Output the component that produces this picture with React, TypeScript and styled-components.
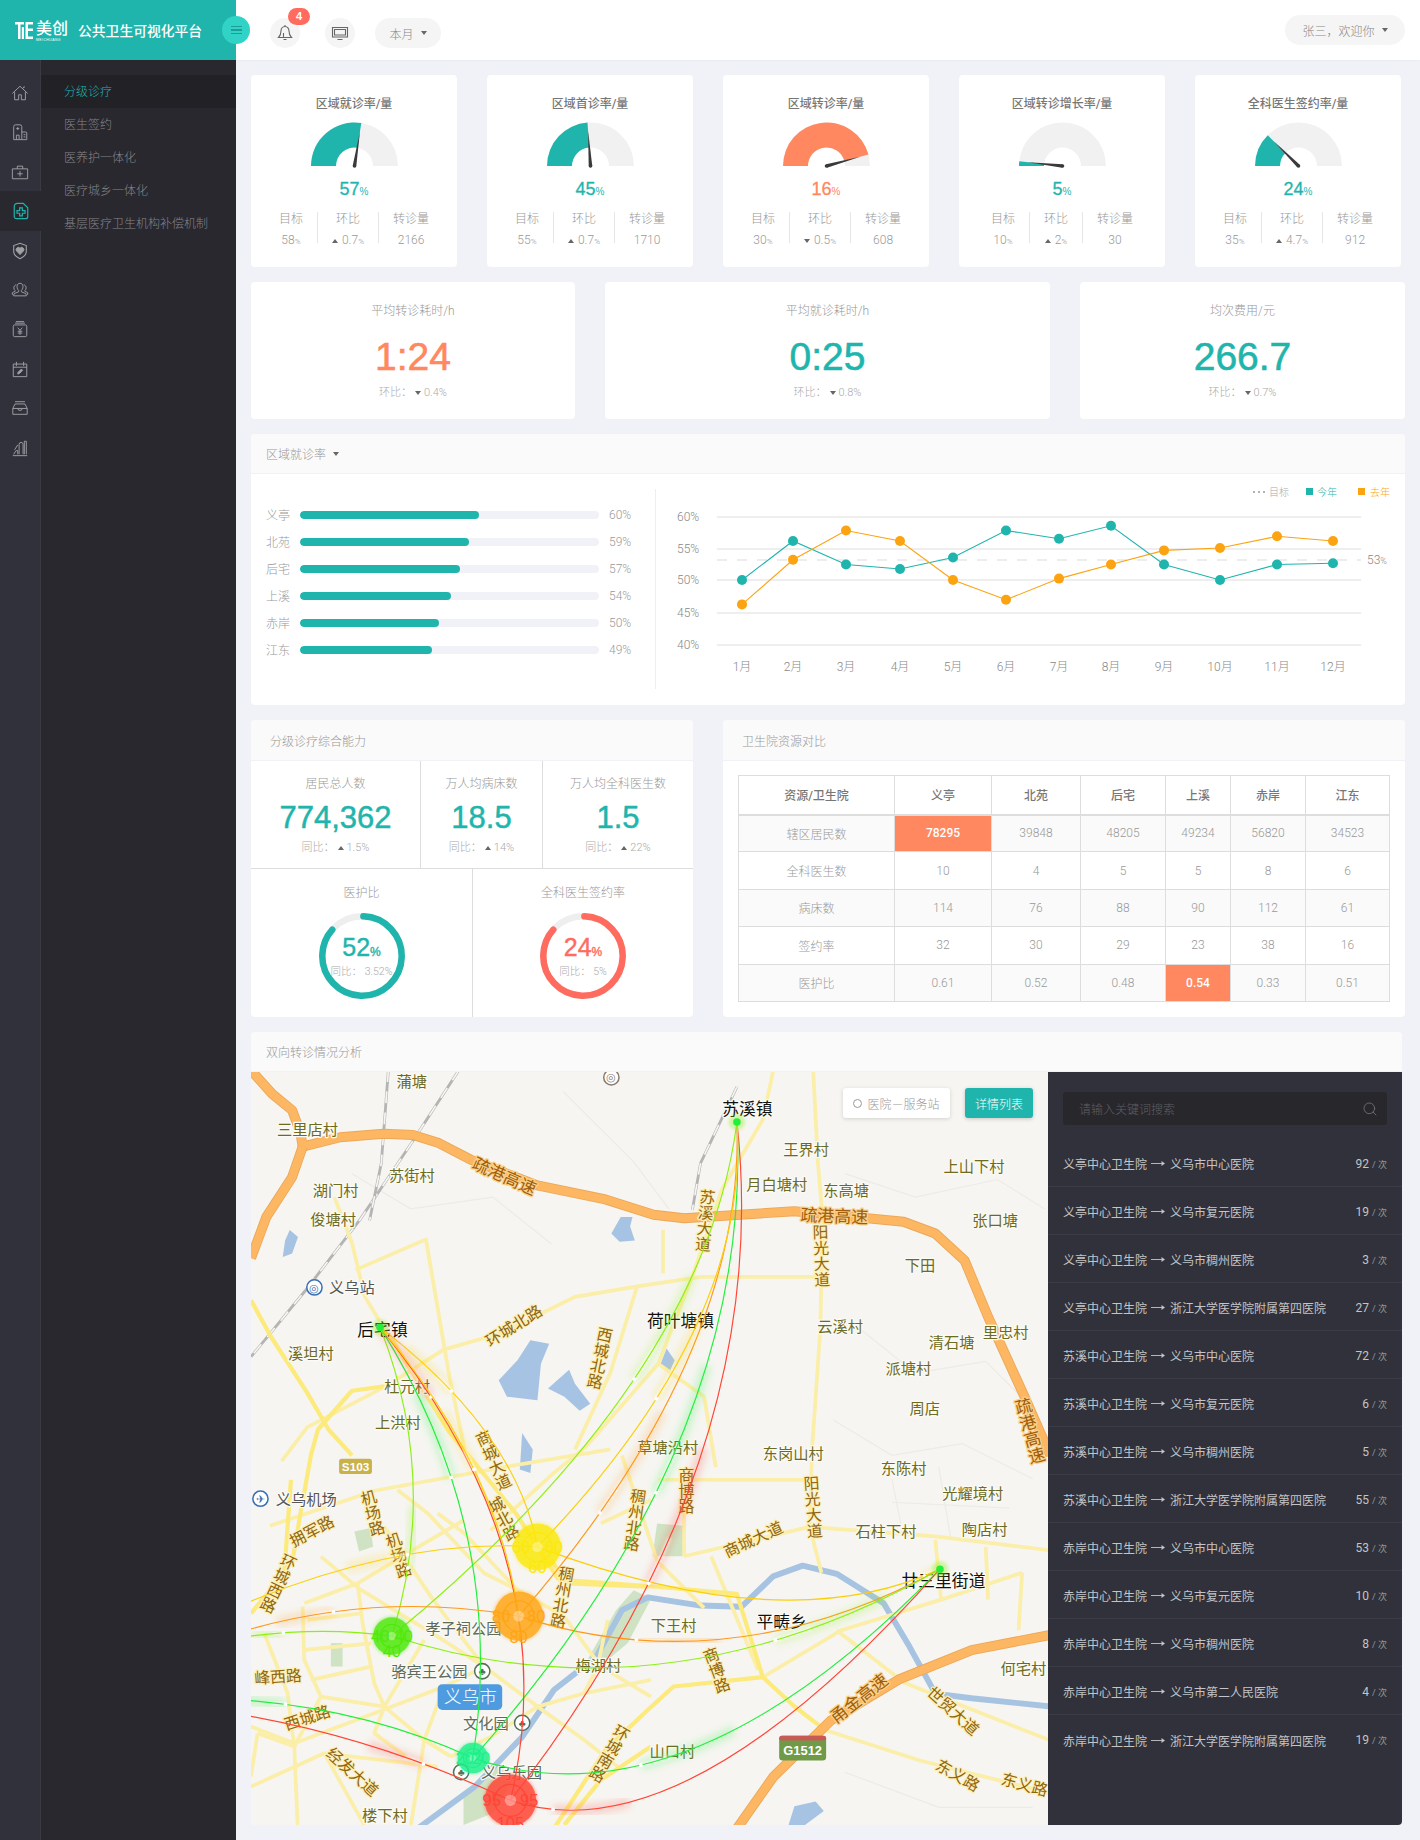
import React, { FC } from 'react';
import styled, { createGlobalStyle } from 'styled-components';
import { Search } from 'lucide-react';

const TEAL = '#1fb5ad';
const CORAL = '#ff8860';
const RED = '#ff6b5e';
const UI_FONT = `Roboto, "Noto Sans CJK SC", sans-serif`;
const NUM_FONT = `"Liberation Sans", "Noto Sans CJK SC", sans-serif`;

const GlobalStyle = createGlobalStyle`
  html, body {
    margin: 0;
    padding: 0;
    background: #f0f2f7;
    font-family: ${UI_FONT};
    font-weight: 300;
    color: #999;
  }
  * { box-sizing: border-box; }
`;

const Page = styled.div`
  display: grid;
  grid-template-columns: 236px 1fr;
  width: 1420px;
  min-height: 1840px;
`;

const Sidebar = styled.aside`
  display: flex;
  flex-direction: column;
  position: relative;
  z-index: 2;
`;

const Brand = styled.div`
  position: relative;
  display: flex;
  align-items: center;
  height: 60px;
  padding-left: 15px;
  background: ${TEAL};
  color: #fff;
`;

const LogoWord = styled.span`
  position: relative;
  width: 32px;
  margin: -3px 10px 0 3px;
  font-size: 16px;
  font-weight: 500;
  line-height: 20px;
  white-space: nowrap;

  &::after {
    content: 'MEICHUANG';
    position: absolute;
    left: 0;
    bottom: -3px;
    font-family: ${NUM_FONT};
    font-size: 3.5px;
    line-height: 4px;
    font-weight: 400;
    letter-spacing: 0.4px;
  }
`;

const BrandTitle = styled.span`
  font-size: 13.8px;
  font-weight: 500;
`;

const MenuToggle = styled.button`
  position: absolute;
  right: -14px;
  top: 16px;
  width: 28px;
  height: 28px;
  padding: 0;
  border: 0;
  border-radius: 50%;
  background: #30d3c6;
  display: flex;
  flex-direction: column;
  align-items: center;
  justify-content: center;
  gap: 2px;

  span {
    width: 11px;
    height: 1.5px;
    background: #1c9f98;
  }
`;

const SideBody = styled.div`
  display: flex;
  flex: 1;
`;

const Rail = styled.nav`
  width: 41px;
  padding-top: 13.3px;
  background: #30313a;
  border-right: 1px solid #393a42;
`;

const RailItem = styled.div<{ $active?: boolean }>`
  height: 39.4px;
  display: flex;
  align-items: center;
  justify-content: center;
  color: ${p => (p.$active ? TEAL : '#a0a0a5')};
  background: ${p => (p.$active ? '#29282e' : 'transparent')};
  margin-right: ${p => (p.$active ? '-1px' : '0')};
`;

const SubNav = styled.nav`
  flex: 1;
  padding-top: 15px;
  background: #29282e;
`;

const SubNavItem = styled.div<{ $active?: boolean }>`
  height: 33px;
  padding: 1px 0 0 23px;
  line-height: 33px;
  font-size: 12px;
  color: ${p => (p.$active ? TEAL : '#85858a')};
  background: ${p => (p.$active ? '#222126' : 'transparent')};
`;

const Main = styled.main`
  display: flex;
  flex-direction: column;
`;

const TopBar = styled.header`
  display: flex;
  align-items: center;
  height: 60px;
  padding: 6px 15px 0 34px;
  background: #fff;
  box-shadow: 0 1px 2px rgba(0, 0, 0, 0.03);
`;

const RoundIcon = styled.div`
  position: relative;
  width: 30px;
  height: 30px;
  margin-right: 25px;
  border-radius: 50%;
  background: #f5f5f5;
  color: #666;
  display: flex;
  align-items: center;
  justify-content: center;
`;

const Badge = styled.span`
  position: absolute;
  top: -10px;
  left: 18px;
  width: 22px;
  height: 17px;
  border-radius: 9px;
  background: ${RED};
  color: #fff;
  font-family: ${NUM_FONT};
  font-size: 11px;
  font-weight: 700;
  line-height: 17px;
  text-align: center;
`;

const Pill = styled.div<{ $width: number; $shift?: boolean }>`
  width: ${p => p.$width}px;
  height: 30px;
  margin-left: ${p => (p.$shift ? 'auto' : '-5px')};
  margin-top: ${p => (p.$shift ? '-6px' : '0')};
  border-radius: 15px;
  background: #f5f5f5;
  color: #888;
  font-size: 12px;
  display: flex;
  align-items: center;
  justify-content: center;
  gap: 7px;
`;

const Caret = styled.i<{ $up?: boolean; $size?: number; $color?: string }>`
  display: inline-block;
  width: 0;
  height: 0;
  border-left: ${p => p.$size ?? 3}px solid transparent;
  border-right: ${p => p.$size ?? 3}px solid transparent;
  border-top: ${p => (p.$up ? '0' : `${p.$size ?? 4}px solid ${p.$color ?? '#666'}`)};
  border-bottom: ${p => (p.$up ? `${p.$size ?? 4}px solid ${p.$color ?? '#666'}` : '0')};
  vertical-align: middle;
`;

const Content = styled.div`
  display: flex;
  flex-direction: column;
  gap: 15px;
  padding: 15px;
`;

const GaugeRow = styled.div`
  display: grid;
  grid-template-columns: repeat(5, 206px);
  gap: 30px;
`;

const Card = styled.section`
  background: #fff;
  border-radius: 4px;
  display: flex;
  flex-direction: column;
  align-items: center;
`;

const GaugeCard = styled(Card)`
  height: 192px;
  padding-top: 20px;
`;

const GaugeTitle = styled.div`
  font-size: 12px;
  line-height: 18px;
  font-weight: 500;
  color: #777;
`;

const GaugeSvg = styled.svg`
  display: block;
  margin-top: 9px;
`;

const GaugeValue = styled.div<{ $color: string }>`
  margin-top: 6px;
  line-height: 24px;
  font-family: ${NUM_FONT};
  font-size: 18px;
  -webkit-text-stroke: 0.3px currentColor;
  color: ${p => p.$color};

  small {
    font-size: 10px;
    -webkit-text-stroke: 0;
  }
`;

const GaugeStats = styled.div`
  display: flex;
  margin-top: 8px;
`;

const GaugeStat = styled.div`
  padding: 0 14px;
  height: 31px;
  text-align: center;
  white-space: nowrap;

  & + & {
    border-left: 1px solid #e6e6e6;
  }

  b {
    display: block;
    font-weight: 300;
    font-size: 12px;
    line-height: 14px;
    color: #999;
  }

  span {
    display: block;
    margin-top: 7px;
    font-size: 12px;
    line-height: 14px;
    color: #999;
  }

  small {
    font-size: 8px;
  }

  i {
    margin-right: 4px;
  }
`;

const KpiRow = styled.div`
  display: grid;
  grid-template-columns: 324px 445px 325px;
  gap: 30px;
`;

const KpiCard = styled(Card)`
  height: 137px;
  padding-top: 20px;
`;

const Label = styled.div`
  font-size: 12px;
  line-height: 18px;
  color: #999;
`;

const BigNumber = styled.div<{ $color: string }>`
  margin-top: 14px;
  font-family: ${NUM_FONT};
  font-size: 39px;
  line-height: 46px;
  -webkit-text-stroke: 0.6px currentColor;
  color: ${p => p.$color};
`;

const Delta = styled.div<{ $top?: number }>`
  margin-top: ${p => p.$top ?? 5}px;
  font-size: 11px;
  line-height: 16px;
  color: #aaa;

  i {
    margin: 0 3px 0 3px;
  }
`;

const Panel = styled.section<{ $width?: number }>`
  ${p => (p.$width ? `width: ${p.$width}px;` : '')}
  background: #fff;
  border-radius: 4px;
  overflow: hidden;
`;

const PanelHead = styled.header<{ $inset?: number; $height?: number }>`
  height: ${p => p.$height ?? 40}px;
  padding-left: ${p => p.$inset ?? 15}px;
  display: flex;
  align-items: center;
  gap: 7px;
  background: #fafafa;
  border-bottom: 1px solid #f0f2f7;
  font-size: 12px;
  color: #999;
`;

const ChartBody = styled.div`
  display: flex;
  height: 231px;
`;

const BarList = styled.div`
  width: 404px;
  padding: 27px 0 0 15px;
`;

const BarRow = styled.div`
  display: flex;
  align-items: center;
  height: 27px;
  font-size: 12px;
  color: #999;
`;

const BarName = styled.span`
  width: 34px;
`;

const BarTrack = styled.div`
  width: 299px;
  height: 8px;
  margin-right: 10px;
  border-radius: 4px;
  background: #f0f2f7;
  overflow: hidden;
`;

const BarFill = styled.div`
  height: 100%;
  border-radius: 4px;
  background: ${TEAL};
`;

const ChartPane = styled.div`
  margin: 15px 0 16px;
  border-left: 1px solid #eee;
`;

const ChartSvg = styled.svg`
  display: block;
  overflow: visible;
`;

const ChartText = styled.text<{ $small?: boolean; $fill?: string }>`
  font-family: ${UI_FONT};
  font-size: ${p => (p.$small ? 10 : 12)}px;
  font-weight: 300;
  fill: ${p => p.$fill ?? '#888'};
`;

const SplitRow = styled.div`
  display: grid;
  grid-template-columns: 442px 682px;
  gap: 30px;
`;

const MetricGrid = styled.div`
  display: grid;
  height: 108px;
  grid-template-columns: 169px 122px 151px;
  border-bottom: 1px solid #ddd;
`;

const MetricCell = styled.div`
  padding-top: 15px;
  text-align: center;

  & + & {
    border-left: 1px solid #ddd;
  }
`;

const MetricLabel = styled.div`
  font-size: 12px;
  line-height: 16px;
  color: #999;
`;

const MetricValue = styled.div`
  margin-top: 8px;
  font-family: ${NUM_FONT};
  font-size: 31px;
  line-height: 36px;
  -webkit-text-stroke: 0.5px currentColor;
  color: ${TEAL};
`;

const RingGrid = styled.div`
  display: grid;
  height: 148px;
  grid-template-columns: 221px 221px;
`;

const RingCell = styled.div`
  padding-top: 16px;
  display: flex;
  flex-direction: column;
  align-items: center;

  & + & {
    border-left: 1px solid #ddd;
  }
`;

const RingBox = styled.div`
  position: relative;
  width: 86px;
  height: 86px;
  margin-top: 12px;
`;

const RingText = styled.div`
  position: absolute;
  inset: 0;
  display: flex;
  flex-direction: column;
  align-items: center;
  justify-content: center;
  white-space: nowrap;
`;

const RingValue = styled.div<{ $color: string }>`
  font-family: ${NUM_FONT};
  font-size: 25px;
  line-height: 26px;
  -webkit-text-stroke: 0.4px currentColor;
  color: ${p => p.$color};

  small {
    font-size: 12px;
  }
`;

const RingDelta = styled.div`
  font-size: 10.5px;
  line-height: 14px;
  color: #aaa;
`;

const TableWrap = styled.div`
  padding: 14px 15px 0 15px;
`;

const Table = styled.table`
  width: 651px;
  table-layout: fixed;
  border-collapse: collapse;
  font-size: 12px;
  color: #999;
  text-align: center;

  th, td {
    border: 1px solid #ddd;
    padding: 0;
  }

  th {
    height: 39px;
    border-bottom-width: 2px;
    font-weight: 500;
    color: #777;
  }

  td {
    height: 37.4px;
  }

  tbody tr:nth-child(odd) {
    background: #fafafa;
  }
`;

const HotCell = styled.td`
  &&& {
    background: ${CORAL};
    color: #fff;
    font-weight: 500;
  }
`;

const FlowPanel = styled(Panel)`
  width: 1151px;
`;

const FlowBody = styled.div`
  display: flex;
  height: 753px;
`;

const MapPane = styled.div`
  position: relative;
  width: 797px;
  background: #f6f5f1;
  overflow: hidden;
`;

const MapSvg = styled.svg`
  display: block;
`;

const mapFontSize: Record<string, number> = { town: 14.3, highway: 14.5, road: 13.5, poi: 13, village: 13 };
const mapFill: Record<string, string> = {
  town: '#111',
  poi: '#555',
  highway: '#a05c08',
  road: '#8f6510',
  village: '#6d6a22',
  park: '#5d6a5c',
};
const mapHalo: Record<string, string> = { highway: '#fbd28c', road: '#fdf0b8' };

const MapText = styled.text<{ $kind: string }>`
  font-family: "Noto Sans CJK SC", sans-serif;
  font-weight: 400;
  font-size: ${p => mapFontSize[p.$kind] ?? 13}px;
  text-anchor: middle;
  dominant-baseline: central;
  paint-order: stroke;
  stroke-width: 2.2px;
  stroke-linejoin: round;
  fill: ${p => mapFill[p.$kind]};
  stroke: ${p => mapHalo[p.$kind] ?? '#fbfaf4'};
`;

const NodeText = styled.text`
  font-family: ${NUM_FONT};
  font-size: 14px;
  text-anchor: middle;
  dominant-baseline: central;
`;

const MapOverlay = styled.div`
  position: absolute;
  top: 16px;
  right: 15px;
  display: flex;
  gap: 15px;
`;

const LegendChip = styled.div`
  width: 107px;
  height: 30px;
  border-radius: 3px;
  background: #fff;
  box-shadow: 0 1px 4px rgba(0, 0, 0, 0.15);
  display: flex;
  align-items: center;
  justify-content: center;
  gap: 5px;
  font-size: 12px;
  color: #999;

  i {
    width: 9px;
    height: 9px;
    border-radius: 50%;
    border: 1px solid #999;
  }
`;

const DetailButton = styled.button`
  width: 68px;
  height: 30px;
  padding: 0;
  border: 0;
  border-radius: 3px;
  background: ${TEAL};
  box-shadow: 0 1px 4px rgba(0, 0, 0, 0.2);
  color: #fff;
  font-family: ${UI_FONT};
  font-size: 12px;
  font-weight: 300;
`;

const RoutePanel = styled.div`
  width: 354px;
  background: #30313a;
  padding-top: 20px;
`;

const SearchBox = styled.div`
  height: 33px;
  margin: 0 15px 14px;
  padding: 0 9px 0 16px;
  border-radius: 3px;
  background: #28272c;
  display: flex;
  align-items: center;
  justify-content: space-between;
  font-size: 12px;
  color: #5f5f64;
`;

const RouteRow = styled.div`
  height: 48px;
  padding: 2px 15px 0;
  border-bottom: 1px solid #3a3b44;
  display: flex;
  align-items: center;
  justify-content: space-between;
  font-size: 12px;
  font-weight: 400;
  color: #c4c4c6;

  &:last-child {
    border-bottom: 0;
  }

  small {
    font-size: 9px;
    color: #9a9a9e;
  }
`;

const RouteName = styled.span`
  display: flex;
  align-items: center;
  gap: 4px;
`;

const railIcons = [
  <path d="M1.500 10.500 10 2.500l8.500 8M4 9v8.500h4.500V12h3v5.500H16V9M14 4.700V3.300h1.500" />,
  <path d="M3 18.500V4a2 2 0 0 1 2-2h5a2 2 0 0 1 2 2v14.500H3zM12 10h4.500a1 1 0 0 1 1 1v7.500H12M5.800 6.200h3.400M7.500 4.500v3.400M6 18.500v-5h3v5M14 13h2M14 15.500h2" />,
  <path d="M1.500 6.500h17v11h-17zM7 6.500V3.500h6v3M10 9v6M7 12h6" />,
  <path d="M6 1.500h6.500l5 5V16a2.500 2.500 0 0 1-2.500 2.500H5A2.500 2.500 0 0 1 2.500 16V5A3.500 3.500 0 0 1 6 1.500zM8.500 6.500h3v3h3v3h-3v3h-3v-3h-3v-3h3z" strokeWidth="1.3" />,
  <>
    <path d="M10 1.500 17 4v6.500c0 3.800-3.500 6.500-7 8-3.500-1.500-7-4.200-7-8V4z" strokeWidth="1.2" />
    <path d="M10 14 6.200 10a2.400 2.400 0 0 1 3.800-3 2.400 2.400 0 0 1 3.800 3z" fill="currentColor" />
  </>,
  <path d="M10 2.500c2 0 3.300 1.500 3.300 3.600 0 2-.8 3.600-1.800 4.400v1.500l4 1.600c.8.300 1.500.8 1.500 1.800v1.100H3v-1.100c0-1 .7-1.500 1.500-1.800l4-1.600v-1.500c-1-.8-1.800-2.400-1.800-4.400 0-2.100 1.300-3.600 3.300-3.600zM5.800 4.200C4 4.700 3.200 6 3.200 7.600c0 1.300.5 2.400 1.300 3v1l-3 1.300v2.600M14.200 4.200c1.800.5 2.600 1.800 2.600 3.400 0 1.300-.5 2.400-1.300 3v1l3 1.300v2.600" />,
  <path d="M2.500 7a1.500 1.500 0 0 1 1.500-1.500h12A1.500 1.500 0 0 1 17.500 7v10a1.500 1.500 0 0 1-1.500 1.500H4A1.500 1.500 0 0 1 2.500 17zM4.500 3.500h11M5.500 1.800h9M7.500 8.500l2.500 3 2.500-3M10 11.500V16.500M7.500 12.500h5M7.500 14.500h5" />,
  <>
    <path d="M2.500 4.500h15v14h-15zM2.500 8h15M6 2v4.500M14 2v4.500" />
    <path d="M7.500 15.500l.4-1.800 3.600-3.600 1.400 1.400-3.600 3.600z" fill="currentColor" />
  </>,
  <path d="M2 10.500h16V17H2zM2 10.500l2.500-5h11l2.500 5M4.500 3h11M7.500 10.500l1 2h3l1-2" />,
  <path d="M2 18.500h16M3 17l2.500-4h2v4M9 17V6a2.200 2.200 0 0 1 4.400 0v11M14.800 17V2.500h2.200V17M4 12l3.500-5.500" />,
];

const subNav = ['分级诊疗', '医生签约', '医养护一体化', '医疗城乡一体化', '基层医疗卫生机构补偿机制'];

type Gauge = {
  title: string;
  frac: number;
  value: number;
  color: string;
  target: number;
  up: boolean;
  ratio: string;
  amount: number;
};

const gauges: Gauge[] = [
  { title: '区域就诊率/量', frac: 0.55, value: 57, color: TEAL, target: 58, up: true, ratio: '0.7', amount: 2166 },
  { title: '区域首诊率/量', frac: 0.478, value: 45, color: TEAL, target: 55, up: true, ratio: '0.7', amount: 1710 },
  { title: '区域转诊率/量', frac: 0.915, value: 16, color: CORAL, target: 30, up: false, ratio: '0.5', amount: 608 },
  { title: '区域转诊增长率/量', frac: 0.035, value: 5, color: TEAL, target: 10, up: true, ratio: '2', amount: 30 },
  { title: '全科医生签约率/量', frac: 0.25, value: 24, color: TEAL, target: 35, up: true, ratio: '4.7', amount: 912 },
];

const GaugeDial: FC<{ frac: number; color: string }> = ({ frac, color }) => {
  const cx = 43.5;
  const cy = 44;
  const R = 43.5;
  const r = 18.5;
  const angle = Math.PI - Math.PI * frac;
  const dx = Math.cos(angle);
  const dy = Math.sin(angle);
  const arc = (end: number) =>
    `M${cx - R} ${cy}A${R} ${R} 0 0 1 ${cx + R * Math.cos(end)} ${cy - R * Math.sin(end)}L${cx + r * Math.cos(end)} ${cy - r * Math.sin(end)}A${r} ${r} 0 0 0 ${cx - r} ${cy}Z`;
  const tip = [cx + dx * 35, cy - dy * 35];
  const base = [
    [cx - dy * 1.8, cy - dx * 1.8],
    [cx + dy * 1.8, cy + dx * 1.8],
  ];
  return (
    <GaugeSvg width="87" height="49" viewBox="0 0 87 49">
      <path d={arc(0)} fill="#f1f1f1" />
      <path d={arc(angle)} fill={color} />
      <polygon points={`${tip[0]},${tip[1]} ${base[0][0]},${base[0][1]} ${base[1][0]},${base[1][1]}`} fill="#3a3a3a" />
      <circle cx={cx} cy={cy} r="1.8" fill="#3a3a3a" />
    </GaugeSvg>
  );
};

const kpis = [
  { title: '平均转诊耗时/h', value: '1:24', color: CORAL, delta: '0.4%' },
  { title: '平均就诊耗时/h', value: '0:25', color: TEAL, delta: '0.8%' },
  { title: '均次费用/元', value: '266.7', color: TEAL, delta: '0.7%' },
];

const bars = [
  { name: '义亭', pct: 60, width: 59.8 },
  { name: '北苑', pct: 59, width: 56.5 },
  { name: '后宅', pct: 57, width: 53.5 },
  { name: '上溪', pct: 54, width: 50.4 },
  { name: '赤岸', pct: 50, width: 46.5 },
  { name: '江东', pct: 49, width: 44 },
];

const monthX = [742, 793, 846, 900, 953, 1006, 1059, 1111, 1164, 1220, 1277, 1333];
const thisYear = [580, 541, 564.5, 569, 557.5, 530.5, 538.7, 525.8, 564.5, 580, 564.5, 563.3];
const lastYear = [604.4, 559.8, 530.5, 541, 580, 599.7, 578.6, 564.5, 550.4, 548, 536.3, 541];
const gridY = [
  { y: 517, label: '60%' },
  { y: 549, label: '55%' },
  { y: 580, label: '50%' },
  { y: 613, label: '45%' },
  { y: 645, label: '40%' },
];

const TrendChart: FC = () => (
  <ChartSvg width="749" height="200" viewBox="656 489 749 200">
    {gridY.map(g => (
      <g key={g.y}>
        <line x1="717" x2="1361" y1={g.y} y2={g.y} stroke="#e8e8e8" strokeWidth="1.5" />
        <ChartText x="677" y={g.y + 4}>{g.label}</ChartText>
      </g>
    ))}
    <line x1="717" x2="1361" y1="560" y2="560" stroke="#e8e8e8" strokeWidth="1.5" strokeDasharray="10 10" />
    <ChartText x="1367" y="564">53<tspan fontSize="9">%</tspan></ChartText>
    {[{ ys: thisYear, c: TEAL }, { ys: lastYear, c: '#fca311' }].map(s => (
      <g key={s.c}>
        <polyline fill="none" stroke={s.c} strokeWidth="1.1" points={s.ys.map((y, i) => `${monthX[i]},${y}`).join(' ')} />
        {s.ys.map((y, i) => (
          <circle key={i} cx={monthX[i]} cy={y} r="5" fill={s.c} />
        ))}
      </g>
    ))}
    {monthX.map((x, i) => (
      <ChartText key={x} x={x} y="671" textAnchor="middle">{i + 1}月</ChartText>
    ))}
    <line x1="1253" x2="1265" y1="492" y2="492" stroke="#999" strokeWidth="1.5" strokeDasharray="2 3" />
    <ChartText x="1269" y="496" $small $fill="#aaa">目标</ChartText>
    <rect x="1306" y="488" width="7" height="7" fill={TEAL} />
    <ChartText x="1317" y="496" $small $fill={TEAL}>今年</ChartText>
    <rect x="1358" y="488" width="7" height="7" fill="#fca311" />
    <ChartText x="1370" y="496" $small $fill="#fca311">去年</ChartText>
  </ChartSvg>
);

const metrics = [
  { label: '居民总人数', value: '774,362', delta: '1.5%' },
  { label: '万人均病床数', value: '18.5', delta: '14%' },
  { label: '万人均全科医生数', value: '1.5', delta: '22%' },
];

const rings = [
  { label: '医护比', value: 52, color: TEAL, delta: '3.52%' },
  { label: '全科医生签约率', value: 24, color: RED, delta: '5%' },
];

const ProgressRing: FC<{ color: string }> = ({ color }) => (
  <svg width="86" height="86" viewBox="0 0 86 86">
    <circle cx="43" cy="43" r="39.7" fill="none" stroke="#eee" strokeWidth="6.5" />
    <circle
      cx="43"
      cy="43"
      r="39.7"
      fill="none"
      stroke={color}
      strokeWidth="6.5"
      strokeLinecap="round"
      pathLength="100"
      strokeDasharray="86 100"
      transform="rotate(-88 43 43)"
    />
  </svg>
);

const tableHead = ['资源/卫生院', '义亭', '北苑', '后宅', '上溪', '赤岸', '江东'];
const tableCols = [156, 97, 89, 85, 65, 75, 84];
const tableRows: { cells: (string | number)[]; hot?: number }[] = [
  { cells: ['辖区居民数', 78295, 39848, 48205, 49234, 56820, 34523], hot: 1 },
  { cells: ['全科医生数', 10, 4, 5, 5, 8, 6] },
  { cells: ['病床数', 114, 76, 88, 90, 112, 61] },
  { cells: ['签约率', 32, 30, 29, 23, 38, 16] },
  { cells: ['医护比', '0.61', '0.52', '0.48', '0.54', '0.33', '0.51'], hot: 4 },
];

const routes: [string, string, number][] = [
  ['义亭中心卫生院', '义乌市中心医院', 92],
  ['义亭中心卫生院', '义乌市复元医院', 19],
  ['义亭中心卫生院', '义乌市稠州医院', 3],
  ['义亭中心卫生院', '浙江大学医学院附属第四医院', 27],
  ['苏溪中心卫生院', '义乌市中心医院', 72],
  ['苏溪中心卫生院', '义乌市复元医院', 6],
  ['苏溪中心卫生院', '义乌市稠州医院', 5],
  ['苏溪中心卫生院', '浙江大学医学院附属第四医院', 55],
  ['赤岸中心卫生院', '义乌市中心医院', 53],
  ['赤岸中心卫生院', '义乌市复元医院', 10],
  ['赤岸中心卫生院', '义乌市稠州医院', 8],
  ['赤岸中心卫生院', '义乌市第二人民医院', 4],
  ['赤岸中心卫生院', '浙江大学医学院附属第四医院', 19],
];

// map drawing, coordinates are in the 1210 wide layout of the page
type Pt = [number, number];
const line = (pts: Pt[]) => pts.map(p => p.join(',')).join(' ');
// city blocks were traced on a 3x crop of the lower left of the map
const fromCrop = (pts: Pt[]): Pt[] => pts.map(([x, y]) => [213.9 + x * 0.284, 1261 + y * 0.284]);

const highways: Pt[][] = [
  [[214, 912], [232, 932], [249, 946], [256, 965], [258, 977], [290, 969], [327, 966], [352, 967], [374, 974], [401, 988], [458, 1010], [516, 1022], [557, 1035], [583, 1038], [677, 1032], [770, 1041], [797, 1051], [822, 1074], [842, 1122], [873, 1190], [895, 1240]],
  [[258, 977], [249, 1003], [227, 1037], [214, 1072]],
  [[628, 1558], [659, 1514], [708, 1466], [766, 1431], [828, 1406], [895, 1393]],
];

const brightRoads: Pt[][] = [
  [[214, 1108], [231, 1139], [262, 1187], [280, 1218], [300, 1240]],
  [[249, 1332], [256, 1290], [265, 1240], [271, 1218], [300, 1185], [329, 1181]],
  [[476, 1346], [560, 1352], [628, 1358], [650, 1429], [677, 1454], [703, 1474]],
  [[650, 1429], [574, 1437], [552, 1457], [516, 1491], [472, 1558]],
  [[330, 1135], [383, 1220], [440, 1290], [476, 1346]],
];

const roads: Pt[][] = [
  [[659, 912], [650, 954], [615, 1014], [592, 1082], [561, 1162], [499, 1233], [472, 1255], [418, 1304]],
  [[693, 912], [697, 991], [701, 1037], [699, 1133], [692, 1235], [690, 1301], [700, 1340]],
  [[597, 1088], [699, 1088]],
  [[597, 1088], [543, 1096], [490, 1105], [427, 1136], [378, 1150], [329, 1181], [262, 1216], [240, 1245]],
  [[303, 1082], [363, 1056], [383, 1173], [396, 1235], [425, 1300]],
  [[285, 1020], [300, 1059], [311, 1105], [325, 1128]],
  [[565, 1048], [565, 1085]],
  [[543, 1096], [520, 1170], [490, 1235]],
  [[561, 1162], [600, 1190], [610, 1250]],
  [[230, 1300], [320, 1270], [430, 1250], [520, 1235]],
  [[561, 1261], [690, 1261]],
  [[583, 1326], [690, 1301], [797, 1309], [895, 1321]],
  [[797, 1312], [802, 1363]],
  [[871, 1340], [802, 1363], [717, 1389], [650, 1429]],
  [[713, 1389], [771, 1434], [895, 1483]],
  [[703, 1474], [784, 1500], [895, 1528]],
  [[583, 1326], [583, 1261]],
  [[606, 1326], [646, 1423]],
  [[871, 1340], [868, 1389]],
  [[840, 1318], [842, 1363]],
  [[530, 1240], [560, 1330], [600, 1370]],
  ...[
    [[160, 370], [320, 310], [520, 190], [640, 120]],
    [[155, 380], [160, 540], [210, 650], [130, 800], [20, 760]],
    [[320, 310], [335, 430], [370, 610], [400, 680], [520, 780], [600, 830]],
    [[170, 420], [330, 400]],
    [[160, 510], [360, 490]],
    [[180, 600], [360, 560]],
    [[210, 650], [400, 680]],
    [[40, 460], [110, 640], [130, 800], [140, 1035]],
    [[0, 740], [130, 790], [370, 700], [580, 620]],
    [[210, 230], [330, 330], [560, 470], [700, 560], [860, 680]],
    [[440, 30], [530, 100], [700, 280], [800, 330]],
    [[400, 140], [540, 350], [600, 430], [700, 560]],
    [[560, 100], [640, 160], [800, 330], [940, 410]],
    [[520, 480], [400, 680], [370, 760], [480, 840]],
    [[700, 560], [580, 620], [520, 780], [480, 1035]],
    [[860, 680], [720, 770], [600, 830]],
    [[860, 680], [1000, 640], [1200, 600]],
    [[860, 680], [1000, 780], [1100, 860]],
    [[1050, 130], [1200, 60]],
    [[940, 410], [1050, 560], [1200, 650]],
    [[1070, 420], [1040, 560], [1000, 640]],
    [[0, 920], [220, 820], [480, 850], [560, 860]],
    [[220, 820], [340, 1035]],
    [[20, 760], [0, 890]],
  ].map(r => fromCrop(r as Pt[])),
];

const cityBright: Pt[][] = [
  [[120, 0], [100, 280], [0, 400]],
  [[900, 240], [950, 310], [1190, 320]],
  [[940, 1035], [1050, 900], [1200, 800]],
].map(r => fromCrop(r as Pt[]));

const minorRoads: Pt[][] = [
  [[300, 1000], [350, 1030], [420, 1020], [470, 1060]],
  [[720, 1000], [780, 1020], [850, 1005], [890, 1030]],
  [[730, 1130], [780, 1170], [840, 1160], [880, 1200]],
  [[710, 1210], [760, 1240], [820, 1230], [880, 1260]],
  [[760, 1260], [770, 1310]],
  [[800, 1250], [810, 1310]],
  [[760, 1280], [860, 1285]],
  [[480, 930], [540, 990], [570, 1030]],
  [[720, 1510], [800, 1540], [880, 1540]],
];

const waters: string[] = [
  '452,1142 468,1145 461,1162 458,1193 432,1190 425,1176 441,1159',
  '467,1183 485,1167 490,1179 503,1196 494,1202 481,1190',
  '529,1037 539,1037 537,1045 541,1057 528,1058 521,1051',
  '247,1048 254,1054 249,1068 241,1071 243,1057',
  '568,1149 575,1159 570,1170 563,1162',
  '445,1221 454,1235 452,1255 443,1252',
  '677,1539 695,1535 702,1543 686,1555 672,1555',
];

const river: Pt[] = [[895, 1454], [828, 1447], [797, 1443], [775, 1403], [753, 1366], [713, 1341], [684, 1334], [659, 1343], [632, 1369], [597, 1368], [552, 1361], [530, 1372], [508, 1412], [472, 1440], [445, 1480], [405, 1522], [356, 1558]];

const parks: string[] = [
  '560,1298 582,1300 582,1326 556,1326',
  '302,1305 316,1302 318,1318 306,1322',
  '282,1400 292,1400 292,1420 282,1420',
  '395,1530 425,1505 440,1512 420,1545 395,1555',
  '525,1372 540,1355 555,1362 535,1400 505,1425 500,1415',
];

type MapLabel = { t: string; x: number; y: number; r?: number; k?: string; v?: boolean };

const labels: MapLabel[] = [
  { t: '蒲塘', x: 351, y: 921 },
  { t: '苏溪镇', x: 637, y: 945, k: 'town' },
  { t: '王界村', x: 687, y: 979 },
  { t: '三里店村', x: 262, y: 962 },
  { t: '苏街村', x: 351, y: 1001 },
  { t: '疏港高速', x: 430, y: 1002, r: 24, k: 'highway' },
  { t: '月白塘村', x: 662, y: 1009 },
  { t: '东高塘', x: 721, y: 1014 },
  { t: '上山下村', x: 830, y: 994 },
  { t: '湖门村', x: 286, y: 1014 },
  { t: '俊塘村', x: 284, y: 1039 },
  { t: '疏港高速', x: 711, y: 1036, r: 2, k: 'highway' },
  { t: '张口塘', x: 848, y: 1040 },
  { t: '苏溪大道', x: 601, y: 1041, r: 5, k: 'road', v: true },
  { t: '阳光大道', x: 700, y: 1071, r: -2, k: 'road', v: true },
  { t: '下田', x: 784, y: 1078 },
  { t: '义乌站', x: 300, y: 1097, k: 'poi' },
  { t: '后宅镇', x: 326, y: 1133, k: 'town' },
  { t: '环城北路', x: 438, y: 1130, r: -32, k: 'road' },
  { t: '荷叶塘镇', x: 580, y: 1126, k: 'town' },
  { t: '云溪村', x: 716, y: 1130 },
  { t: '里忠村', x: 857, y: 1135 },
  { t: '清石塘', x: 811, y: 1144 },
  { t: '溪坦村', x: 265, y: 1153 },
  { t: '西城北路', x: 511, y: 1158, r: 12, k: 'road', v: true },
  { t: '派塘村', x: 774, y: 1166 },
  { t: '杜元村', x: 347, y: 1181 },
  { t: '周店', x: 788, y: 1200 },
  { t: '上洪村', x: 339, y: 1212 },
  { t: '疏港高速', x: 878, y: 1220, r: -15, k: 'highway', v: true },
  { t: '商城大道', x: 421, y: 1245, r: -24, k: 'road', v: true },
  { t: '草塘沿村', x: 569, y: 1233 },
  { t: '东岗山村', x: 676, y: 1238 },
  { t: '东陈村', x: 770, y: 1251 },
  { t: '义乌机场', x: 261, y: 1277, k: 'poi' },
  { t: '光耀境村', x: 829, y: 1272 },
  { t: '商博路', x: 585, y: 1271, k: 'road', v: true },
  { t: '阳光大道', x: 693, y: 1285, r: -4, k: 'road', v: true },
  { t: '机场路', x: 318, y: 1290, r: -15, k: 'road', v: true },
  { t: '拥军路', x: 266, y: 1305, r: -28, k: 'road' },
  { t: '石柱下村', x: 755, y: 1305 },
  { t: '陶店村', x: 839, y: 1303 },
  { t: '商城大道', x: 642, y: 1312, r: -25, k: 'road' },
  { t: '城北路', x: 430, y: 1295, r: -28, k: 'road', v: true },
  { t: '稠州北路', x: 541, y: 1296, r: 8, k: 'road', v: true },
  { t: '机场路', x: 340, y: 1326, r: -18, k: 'road', v: true },
  { t: '环城西路', x: 237, y: 1350, r: 25, k: 'road', v: true },
  { t: '稠州北路', x: 479, y: 1362, r: 10, k: 'road', v: true },
  { t: '廿三里街道', x: 804, y: 1347, k: 'town' },
  { t: '孝子祠公园', x: 395, y: 1387, k: 'park' },
  { t: '平畴乡', x: 666, y: 1382, k: 'town' },
  { t: '下王村', x: 574, y: 1385 },
  { t: '骆宾王公园', x: 366, y: 1424, k: 'park' },
  { t: '梅湖村', x: 510, y: 1419 },
  { t: '商博路', x: 611, y: 1424, r: -20, k: 'road', v: true },
  { t: '何宅村', x: 872, y: 1421 },
  { t: '峰西路', x: 237, y: 1429, r: -4, k: 'road' },
  { t: '甬金高速', x: 732, y: 1447, r: -38, k: 'highway' },
  { t: '世贸大道', x: 812, y: 1458, r: 42, k: 'road' },
  { t: '文化园', x: 414, y: 1468, k: 'park' },
  { t: '西城路', x: 262, y: 1464, r: -18, k: 'road' },
  { t: '环城南路', x: 519, y: 1495, r: 30, k: 'road', v: true },
  { t: '山口村', x: 573, y: 1492 },
  { t: '经发大道', x: 300, y: 1510, r: 42, k: 'road' },
  { t: '义乌乐园', x: 436, y: 1510, k: 'park' },
  { t: '东义路', x: 816, y: 1513, r: 30, k: 'road' },
  { t: '东义路', x: 873, y: 1521, r: 15, k: 'road' },
  { t: '楼下村', x: 328, y: 1547 },
];

const pois: { x: number; y: number; c: string; g: string }[] = [
  { x: 268, y: 1097, c: '#3b6fb5', g: '◎' },
  { x: 222, y: 1277, c: '#3b6fb5', g: '✈' },
  { x: 411, y: 1424, c: '#55705c', g: '♣' },
  { x: 445, y: 1468, c: '#55705c', g: '♣' },
  { x: 393, y: 1510, c: '#55705c', g: '♣' },
  { x: 521, y: 918, c: '#8a7a70', g: '◎' },
];

type Flow = { from: Pt; ctrl: Pt; to: Pt; color: string; head: number };

const C_RED = '#ff4536';
const C_GREEN = '#22ee3c';
const C_LIME = '#8cf013';
const C_YELLOW = '#fbcf0c';
const C_ORANGE = '#ff981c';

const NODES = {
  red: { p: [435, 1534] as Pt, r: 22, c: C_RED, v: '95', extra: '105' },
  green: { p: [403, 1498] as Pt, r: 13, c: '#1cf08a', v: '20', extra: '' },
  lime: { p: [334, 1394] as Pt, r: 16, c: '#4fe80c', v: '40', extra: '40' },
  yellow: { p: [458, 1318] as Pt, r: 20, c: '#fbe80c', v: '60', extra: '60' },
  orange: { p: [442, 1377] as Pt, r: 21, c: '#ffa514', v: '80', extra: '80' },
};

const SUXI: Pt = [628, 956];
const HOUZHAI: Pt = [324, 1131];
const NIANSANLI: Pt = [801, 1337];

const flows: Flow[] = [
  { from: NIANSANLI, ctrl: [670, 1398], to: NODES.yellow.p, color: C_YELLOW, head: 0.05 },
  { from: NIANSANLI, ctrl: [621, 1435], to: NODES.orange.p, color: C_ORANGE, head: 0.72 },
  { from: NIANSANLI, ctrl: [567, 1469], to: NODES.lime.p, color: C_LIME, head: 0.3 },
  { from: NIANSANLI, ctrl: [585, 1560], to: NODES.green.p, color: C_GREEN, head: 0.62 },
  { from: NIANSANLI, ctrl: [582, 1584], to: NODES.red.p, color: C_RED, head: 0.88 },
  { from: SUXI, ctrl: [660, 1245], to: NODES.red.p, color: C_RED, head: 0.68 },
  { from: SUXI, ctrl: [642, 1230], to: NODES.green.p, color: C_GREEN, head: 0.58 },
  { from: SUXI, ctrl: [635, 1155], to: NODES.orange.p, color: C_ORANGE, head: 0.8 },
  { from: SUXI, ctrl: [640, 1130], to: NODES.yellow.p, color: C_YELLOW, head: 0.66 },
  { from: SUXI, ctrl: [600, 1175], to: NODES.lime.p, color: C_LIME, head: 0.5 },
  { from: HOUZHAI, ctrl: [440, 1220], to: NODES.yellow.p, color: C_YELLOW, head: 0.3 },
  { from: HOUZHAI, ctrl: [375, 1262], to: NODES.lime.p, color: C_LIME, head: 0.78 },
  { from: HOUZHAI, ctrl: [433, 1305], to: NODES.green.p, color: C_GREEN, head: 0.36 },
  { from: HOUZHAI, ctrl: [484, 1328], to: NODES.red.p, color: C_RED, head: 0.15 },
  { from: HOUZHAI, ctrl: [425, 1250], to: NODES.orange.p, color: C_YELLOW, head: 0.5 },
  { from: [200, 1370], ctrl: [340, 1310], to: NODES.yellow.p, color: C_YELLOW, head: 0.55 },
  { from: [200, 1392], ctrl: [320, 1355], to: NODES.orange.p, color: C_ORANGE, head: 0.35 },
  { from: [200, 1396], ctrl: [270, 1385], to: NODES.lime.p, color: C_LIME, head: 0.3 },
  { from: [200, 1448], ctrl: [310, 1455], to: NODES.green.p, color: C_GREEN, head: 0.2 },
  { from: [200, 1460], ctrl: [320, 1480], to: NODES.red.p, color: C_RED, head: 0.68 },
];

const qAt = (f: Flow, t: number): Pt => {
  const u = 1 - t;
  return [
    u * u * f.from[0] + 2 * u * t * f.ctrl[0] + t * t * f.to[0],
    u * u * f.from[1] + 2 * u * t * f.ctrl[1] + t * t * f.to[1],
  ];
};

const trail = (f: Flow): Pt[] => {
  const pts: Pt[] = [];
  for (let i = 0; i <= 12; i++) {
    pts.push(qAt(f, Math.max(0, f.head - 0.2 + (0.2 * i) / 12)));
  }
  return pts;
};

const RoadLayer: FC = () => (
  <>
    {parks.map(p => (
      <polygon key={p} points={p} fill="#cfe3c4" />
    ))}
    {minorRoads.map((r, i) => (
      <polyline key={i} points={line(r)} fill="none" stroke="#ecebe6" strokeWidth="1" />
    ))}
    <polyline points={line(river)} fill="none" stroke="#a7c3e2" strokeWidth="5" strokeLinejoin="round" />
    {waters.map(w => (
      <polygon key={w} points={w} fill="#a6c3e4" />
    ))}
    {[
      [[391, 912], [350, 975], [307, 1039], [260, 1100], [214, 1156]],
      [[331, 912], [325, 991], [315, 1040]],
      [[628, 926], [597, 991], [590, 1031]],
    ].map((r, i) => (
      <g key={i}>
        <polyline points={line(r as Pt[])} fill="none" stroke="#b4b4b4" strokeWidth="2.4" />
        <polyline points={line(r as Pt[])} fill="none" stroke="#f6f5f1" strokeWidth="1.4" strokeDasharray="10 8" />
      </g>
    ))}
    {roads.map((r, i) => (
      <polyline key={i} points={line(r)} fill="none" stroke="#fbeea8" strokeWidth="3.2" strokeLinejoin="round" />
    ))}
    {[...brightRoads, ...cityBright].map((r, i) => (
      <polyline key={i} points={line(r)} fill="none" stroke="#fdea7c" strokeWidth="3.6" strokeLinejoin="round" />
    ))}
    {highways.map((r, i) => (
      <g key={i}>
        <polyline points={line(r)} fill="none" stroke="#eba758" strokeWidth="8.5" strokeLinejoin="round" />
        <polyline points={line(r)} fill="none" stroke="#fdb763" strokeWidth="7" strokeLinejoin="round" />
      </g>
    ))}
  </>
);

const LabelLayer: FC = () => (
  <>
    {labels.map(l => (
      <MapText
        key={`${l.t}${l.x}`}
        $kind={l.k ?? 'village'}
        x={l.x}
        y={l.y - 1}
        transform={l.r ? `rotate(${l.r} ${l.x} ${l.y})` : undefined}
        style={l.v ? { writingMode: 'vertical-rl' } : undefined}
      >
        {l.t}
      </MapText>
    ))}
    {pois.map(p => (
      <g key={`${p.x}${p.y}`}>
        <circle cx={p.x} cy={p.y} r="6.5" fill="#fff" stroke={p.c} strokeWidth="1.3" />
        <text x={p.x} y={p.y + 3.5} fontSize="9" textAnchor="middle" fill={p.c} fontFamily="DejaVu Sans">{p.g}</text>
      </g>
    ))}
    <rect x="289" y="1243" width="28" height="13" rx="2" fill="#c9b24a" />
    <text x="303" y="1253" fontSize="10" fontWeight="700" textAnchor="middle" fill="#fff" fontFamily="Liberation Sans">S103</text>
    <rect x="373" y="1435" width="55" height="22" rx="4" fill="#4f9be0" />
    <text x="401" y="1451" fontSize="15" textAnchor="middle" fill="#fff" fontFamily="Noto Sans CJK SC">义乌市</text>
    <rect x="664" y="1479" width="40" height="21" rx="3" fill="#6f9b49" />
    <rect x="664" y="1479" width="40" height="4" rx="2" fill="#c85a55" />
    <text x="684" y="1495" fontSize="11" fontWeight="700" textAnchor="middle" fill="#fff" fontFamily="Liberation Sans">G1512</text>
  </>
);

const FlowLayer: FC = () => (
  <>
    {flows.map((f, i) => {
      const pts = trail(f);
      const head = pts[pts.length - 1];
      return (
        <g key={i}>
          <polyline points={line(pts)} fill="none" stroke={f.color} strokeWidth="9" opacity="0.2" filter="url(#mapGlow)" />
          <polyline points={line(pts.slice(8))} fill="none" stroke="#fff" strokeWidth="2.5" opacity="0.75" filter="url(#mapSoft)" />
          <path d={`M${f.from[0]} ${f.from[1]}Q${f.ctrl[0]} ${f.ctrl[1]} ${f.to[0]} ${f.to[1]}`} fill="none" stroke={f.color} strokeWidth="1" />
          <circle cx={head[0]} cy={head[1]} r="1.6" fill="#fff" />
        </g>
      );
    })}
    {Object.values(NODES).map(n => (
      <g key={n.c}>
        <circle cx={n.p[0]} cy={n.p[1]} r={n.r + 1} fill={n.c} opacity="0.35" filter="url(#mapSoft)" />
        <circle cx={n.p[0]} cy={n.p[1]} r={n.r} fill={n.c} opacity="0.78" />
        <circle cx={n.p[0]} cy={n.p[1]} r={n.r * 0.62} fill="none" stroke={n.c} strokeWidth="1" />
        <circle cx={n.p[0]} cy={n.p[1]} r={n.r * 0.22} fill="#fff" opacity="0.35" />
        <NodeText x={n.p[0] - n.r + 6} y={n.p[1]} fill={n.c}>{n.v}</NodeText>
        <NodeText x={n.p[0] + n.r - 6} y={n.p[1]} fill={n.c}>{n.v}</NodeText>
        {n.extra && <NodeText x={n.p[0]} y={n.p[1] + n.r - 3} fill={n.c}>{n.extra}</NodeText>}
      </g>
    ))}
    {[SUXI, HOUZHAI, NIANSANLI].map(p => (
      <g key={p[0]}>
        <circle cx={p[0]} cy={p[1]} r="7" fill={C_LIME} opacity="0.35" filter="url(#mapSoft)" />
        <circle cx={p[0]} cy={p[1]} r="3.2" fill={C_GREEN} />
      </g>
    ))}
  </>
);

const FlowMap: FC = () => (
  <MapPane>
    <MapSvg width="797" height="753" viewBox="214 913.4 679 641.6">
      <defs>
        <filter id="mapGlow" x="-50%" y="-50%" width="200%" height="200%">
          <feGaussianBlur stdDeviation="3" />
        </filter>
        <filter id="mapSoft" x="-50%" y="-50%" width="200%" height="200%">
          <feGaussianBlur stdDeviation="1.2" />
        </filter>
      </defs>
      <RoadLayer />
      <LabelLayer />
      <FlowLayer />
    </MapSvg>
    <MapOverlay>
      <LegendChip>
        <i />
        医院－服务站
      </LegendChip>
      <DetailButton>详情列表</DetailButton>
    </MapOverlay>
  </MapPane>
);

const App: FC = () => (
  <Page>
    <GlobalStyle />
    <Sidebar>
      <Brand>
        <svg width="18" height="17" viewBox="0 0 18 17">
          <path d="M0 0h9v2.500H5.500V17H3V2.500H0zM6.800 5H9v12H6.800zM10.500 0H18v2.500h-5v4h5V9h-5v5.500h5V17h-7.500z" fill="#fff" />
        </svg>
        <LogoWord>美创</LogoWord>
        <BrandTitle>公共卫生可视化平台</BrandTitle>
        <MenuToggle>
          <span />
          <span />
          <span />
        </MenuToggle>
      </Brand>
      <SideBody>
        <Rail>
          {railIcons.map((icon, i) => (
            <RailItem key={i} $active={i === 3}>
              <svg width="18" height="18" viewBox="0 0 20 20" fill="none" stroke="currentColor" strokeWidth="1.05">
                {icon}
              </svg>
            </RailItem>
          ))}
        </Rail>
        <SubNav>
          {subNav.map((s, i) => (
            <SubNavItem key={s} $active={i === 0}>{s}</SubNavItem>
          ))}
        </SubNav>
      </SideBody>
    </Sidebar>

    <Main>
      <TopBar>
        <RoundIcon>
          <svg width="16" height="18" viewBox="0 0 16 18" fill="none" stroke="#666" strokeWidth="1.1">
            <path d="M8 2.500c-2.500 0-4 2-4 4.500 0 3-1 5-2.500 6.500h13C13 12 12 10 12 7c0-2.500-1.500-4.500-4-4.500zM6.500 13.500V9M6.500 15.500h3M8 1v1.500" />
          </svg>
          <Badge>4</Badge>
        </RoundIcon>
        <RoundIcon>
          <svg width="18" height="15" viewBox="0 0 18 15" fill="none" stroke="#666" strokeWidth="1.1">
            <path d="M1.500 1.500h15v9.500h-15zM3.500 3.500h11v5.500h-11zM6.500 13.500h5" />
          </svg>
        </RoundIcon>
        <Pill $width={66}>
          本月
          <Caret />
        </Pill>
        <Pill $width={120} $shift>
          张三，欢迎你
          <Caret />
        </Pill>
      </TopBar>

      <Content>
        <GaugeRow>
          {gauges.map(g => (
            <GaugeCard key={g.title}>
              <GaugeTitle>{g.title}</GaugeTitle>
              <GaugeDial frac={g.frac} color={g.color} />
              <GaugeValue $color={g.color}>
                {g.value}
                <small>%</small>
              </GaugeValue>
              <GaugeStats>
                <GaugeStat>
                  <b>目标</b>
                  <span>{g.target}<small>%</small></span>
                </GaugeStat>
                <GaugeStat>
                  <b>环比</b>
                  <span>
                    <Caret $up={g.up} />
                    {g.ratio}
                    <small>%</small>
                  </span>
                </GaugeStat>
                <GaugeStat>
                  <b>转诊量</b>
                  <span>{g.amount}</span>
                </GaugeStat>
              </GaugeStats>
            </GaugeCard>
          ))}
        </GaugeRow>

        <KpiRow>
          {kpis.map(k => (
            <KpiCard key={k.title}>
              <Label>{k.title}</Label>
              <BigNumber $color={k.color}>{k.value}</BigNumber>
              <Delta>
                环比：
                <Caret />
                {k.delta}
              </Delta>
            </KpiCard>
          ))}
        </KpiRow>

        <Panel>
          <PanelHead>
            区域就诊率
            <Caret />
          </PanelHead>
          <ChartBody>
            <BarList>
              {bars.map(b => (
                <BarRow key={b.name}>
                  <BarName>{b.name}</BarName>
                  <BarTrack>
                    <BarFill style={{ width: `${b.width}%` }} />
                  </BarTrack>
                  {b.pct}%
                </BarRow>
              ))}
            </BarList>
            <ChartPane>
              <TrendChart />
            </ChartPane>
          </ChartBody>
        </Panel>

        <SplitRow>
          <Panel>
            <PanelHead $inset={19} $height={41}>分级诊疗综合能力</PanelHead>
            <MetricGrid>
              {metrics.map(m => (
                <MetricCell key={m.label}>
                  <MetricLabel>{m.label}</MetricLabel>
                  <MetricValue>{m.value}</MetricValue>
                  <Delta $top={4}>
                    同比：
                    <Caret $up />
                    {m.delta}
                  </Delta>
                </MetricCell>
              ))}
            </MetricGrid>
            <RingGrid>
              {rings.map(r => (
                <RingCell key={r.label}>
                  <MetricLabel>{r.label}</MetricLabel>
                  <RingBox>
                    <ProgressRing color={r.color} />
                    <RingText>
                      <RingValue $color={r.color}>
                        {r.value}
                        <small>%</small>
                      </RingValue>
                      <RingDelta>同比： {r.delta}</RingDelta>
                    </RingText>
                  </RingBox>
                </RingCell>
              ))}
            </RingGrid>
          </Panel>

          <Panel>
            <PanelHead $inset={19} $height={41}>卫生院资源对比</PanelHead>
            <TableWrap>
              <Table>
                <colgroup>
                  {tableCols.map((w, i) => (
                    <col key={i} width={w} />
                  ))}
                </colgroup>
                <thead>
                  <tr>
                    {tableHead.map(h => (
                      <th key={h}>{h}</th>
                    ))}
                  </tr>
                </thead>
                <tbody>
                  {tableRows.map(r => (
                    <tr key={r.cells[0]}>
                      {r.cells.map((c, i) =>
                        i === r.hot ? <HotCell key={i}>{c}</HotCell> : <td key={i}>{c}</td>
                      )}
                    </tr>
                  ))}
                </tbody>
              </Table>
            </TableWrap>
          </Panel>
        </SplitRow>

        <FlowPanel>
          <PanelHead>双向转诊情况分析</PanelHead>
          <FlowBody>
            <FlowMap />
            <RoutePanel>
              <SearchBox>
                请输入关键词搜索
                <Search size={16} color="#7a7a7e" strokeWidth={1.2} />
              </SearchBox>
              {routes.map(([from, to, n]) => (
                <RouteRow key={from + to}>
                  <RouteName>
                    {from}
                    <svg width="15" height="7" viewBox="0 0 15 7">
                      <path d="M0 3.500h11" stroke="#c4c4c6" strokeWidth="0.9" />
                      <path d="M10.500 1l3.500 2.500-3.500 2.500z" fill="#c4c4c6" />
                    </svg>
                    {to}
                  </RouteName>
                  <span>
                    {n} <small>/ 次</small>
                  </span>
                </RouteRow>
              ))}
            </RoutePanel>
          </FlowBody>
        </FlowPanel>
      </Content>
    </Main>
  </Page>
);

export default App;
